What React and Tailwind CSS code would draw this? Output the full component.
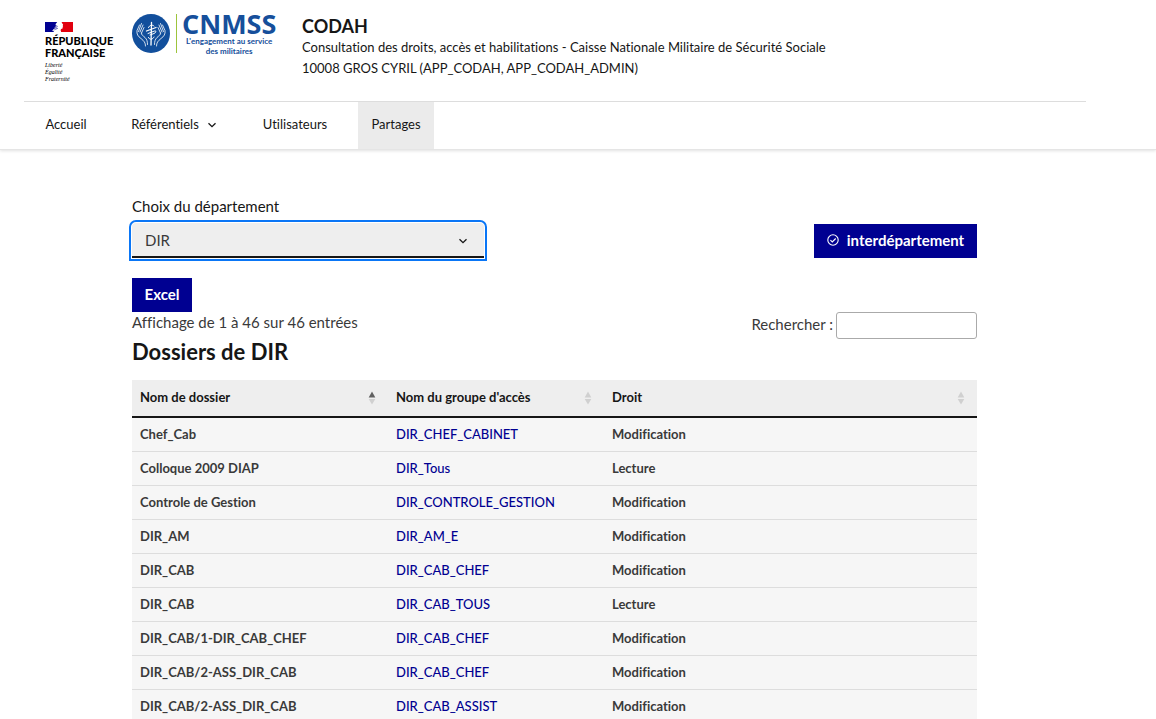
import { useState } from "react";

const NAV_ITEMS = [
  { label: "Accueil", className: "ml-[7px] w-[70px]" },
  { label: "Référentiels", className: "ml-4 w-[114px]", menu: true },
  { label: "Utilisateurs", className: "ml-[17px] w-[94px]" },
  { label: "Partages", className: "ml-4 w-[76px]", active: true },
];

const COLUMNS = [
  { label: "Nom de dossier", width: "w-[256px]", sort: "asc" },
  { label: "Nom du groupe d'accès", width: "w-[216px]" },
  { label: "Droit", width: "" },
];

const DOSSIERS = [
  { nom: "Chef_Cab", groupe: "DIR_CHEF_CABINET", droit: "Modification" },
  { nom: "Colloque 2009 DIAP", groupe: "DIR_Tous", droit: "Lecture" },
  { nom: "Controle de Gestion", groupe: "DIR_CONTROLE_GESTION", droit: "Modification" },
  { nom: "DIR_AM", groupe: "DIR_AM_E", droit: "Modification" },
  { nom: "DIR_CAB", groupe: "DIR_CAB_CHEF", droit: "Modification" },
  { nom: "DIR_CAB", groupe: "DIR_CAB_TOUS", droit: "Lecture" },
  { nom: "DIR_CAB/1-DIR_CAB_CHEF", groupe: "DIR_CAB_CHEF", droit: "Modification" },
  { nom: "DIR_CAB/2-ASS_DIR_CAB", groupe: "DIR_CAB_CHEF", droit: "Modification" },
  { nom: "DIR_CAB/2-ASS_DIR_CAB", groupe: "DIR_CAB_ASSIST", droit: "Modification" },
];

const Chevron = ({ className }) => (
  <svg viewBox="0 0 10 10" className={className} fill="none" stroke="currentColor" strokeWidth="1.3" aria-hidden="true">
    <path d="M1.5 3.2 5 6.7l3.5-3.5" />
  </svg>
);

const SortIcon = ({ sort }) => (
  <svg width="8" height="14" viewBox="0 0 8 14" aria-hidden="true">
    <path d="M4 0.5 7.3 6.5H0.7z" fill={sort === "asc" ? "#606060" : "#d0d0d0"} />
    <path d="M4 13.5 7.3 8H0.7z" fill="#d0d0d0" />
  </svg>
);

const RepubliqueLogo = () => (
  <div className="mt-[22px] w-[87px] text-black">
    <svg width="28" height="10" viewBox="0 0 28 10" aria-hidden="true">
      <path d="M0 0h14v10H0z" fill="#000091" />
      <path d="M14 0h14v10H14z" fill="#e1000f" />
      <path
        d="M12.2 0h4.4l.6 1.4 1 .8-.5.8.4 1.2-.5.9.2 1.2-1.6.6-.6 1 .5 2.1H8.300l1-1.3-2.400.4 1.700-1.5-.7-.2 2.300-1.200-.7-.5 1.600-1.600-.6-1.800z"
        fill="#fff"
      />
      <path d="M10.500 3.200l2 1.200-2.400 1.500 2.600.5-3.400 1.400" fill="none" stroke="#5a5ab4" strokeWidth=".8" />
    </svg>
    <p className="mt-[3px] font-['Lato'] text-[11px] leading-[12px] font-black">
      RÉPUBLIQUE
      <br />
      FRANÇAISE
    </p>
    <p className="mt-[3px] font-['Liberation_Serif'] text-[6px] leading-[7px] italic">
      Liberté
      <br />
      Égalité
      <br />
      Fraternité
    </p>
  </div>
);

const CnmssLogo = () => (
  <div className="mt-[13px] flex w-[170px] text-[#164f9b]">
    <svg width="38" height="40" viewBox="0 0 38 40" className="shrink-0" aria-hidden="true">
      <ellipse cx="19" cy="20.5" rx="19" ry="19.5" fill="#124f9c" />
      <g fill="none" stroke="#fff" strokeLinecap="round" strokeLinejoin="round">
        <path
          strokeWidth=".8"
          d="M13.500 33C13.500 29.500 12 28 9 25.500 6 23.500 4.500 21 5 17.500L7.500 12M6.500 18.500 9.500 10.500M8 19l3-7M9.500 20l2.500-5.500M9.500 20c-.5 2 1.500 2.500 3.500 4.500s2.500 4 2.500 7"
        />
        <path
          strokeWidth=".8"
          d="M24.500 33c0-3.500 1.500-5 4.500-7.500 3-2 4.500-4.500 4-8L30.500 12M31.500 18.500 28.500 10.500M30 19l-3-7M28.500 20 26 14.500M28.500 20c.5 2-1.500 2.500-3.500 4.500s-2.500 4-2.500 7"
        />
        <path strokeWidth="1.300" d="M19.500 9.500 19 32M14.500 18l9.500-3.500" />
        <path strokeWidth="1" d="M16.500 14.500c1-2.500 4-3 5.500-1.500M16 20.500l6.500-2.500c2-1 1.500 2-.5 2.500l-4 1.500M16.500 24.500c1 2.500 4 2.500 5.500-.5" />
      </g>
    </svg>
    <span className="mt-px ml-[6px] h-[39px] w-px bg-[#9dc43c]" />
    <div className="ml-[5px]">
      <p className="h-[23px] font-['Open_Sans'] text-[27px] leading-[22px] font-bold">CNMSS</p>
      <p className="font-['Lato'] text-[8px] leading-[10px] font-bold whitespace-nowrap">
        <span className="block text-center">L'engagement au service</span>
        <span className="block text-center">des militaires</span>
      </p>
    </div>
  </div>
);

const Header = () => (
  <header className="border-b border-[#e5e5e5] shadow-[0_1px_3px_rgba(0,0,0,0.12)]">
    <div className="mr-[70px] ml-6">
      <div className="flex h-[101px] pl-[21px]">
        <RepubliqueLogo />
        <CnmssLogo />
        <div className="pt-4 text-[13px] text-[#161616]">
          <h1 className="text-[18px] leading-5 font-bold">CODAH</h1>
          <p className="mt-px leading-[21px]">
            Consultation des droits, accès et habilitations - Caisse Nationale Militaire de Sécurité Sociale
          </p>
          <p className="leading-5">10008 GROS CYRIL (APP_CODAH, APP_CODAH_ADMIN)</p>
        </div>
      </div>
      <nav className="flex border-t border-[#dddddd]">
        {NAV_ITEMS.map((item) =>
          item.menu ? (
            <button
              key={item.label}
              type="button"
              className={`flex h-[47px] items-center justify-center gap-2 pb-[2px] text-[13px] text-[#161616] ${item.className}`}
            >
              {item.label}
              <Chevron className="size-[10px]" />
            </button>
          ) : (
            <a
              key={item.label}
              href="#"
              aria-current={item.active ? "page" : undefined}
              className={`flex h-[47px] items-center justify-center pb-[2px] text-[13px] text-[#161616] ${
                item.active ? "bg-[#ebebeb]" : ""
              } ${item.className}`}
            >
              {item.label}
            </a>
          )
        )}
      </nav>
    </div>
  </header>
);

const DossiersTable = () => (
  <table className="mt-4 w-full table-fixed border-collapse text-left text-[13px] font-bold">
    <thead className="border-b-2 border-[#161616] bg-[#eeeeee] text-[#161616]">
      <tr className="h-[37px]">
        {COLUMNS.map((col) => (
          <th key={col.label} className={`px-2 ${col.width}`}>
            <div className="flex items-center justify-between pr-1">
              {col.label}
              <SortIcon sort={col.sort} />
            </div>
          </th>
        ))}
      </tr>
    </thead>
    <tbody className="bg-[#f6f6f6] text-[#3a3a3a]">
      {DOSSIERS.map((dossier, index) => (
        <tr key={index} className="h-[34px] border-b border-[#dddddd]">
          <td className="px-2 pt-px">{dossier.nom}</td>
          <td className="px-2 pt-px font-medium">
            <a href="#" className="text-[#000091]">
              {dossier.groupe}
            </a>
          </td>
          <td className="px-2 pt-px">{dossier.droit}</td>
        </tr>
      ))}
    </tbody>
  </table>
);

const App = () => {
  const [departement, setDepartement] = useState("DIR");
  const [recherche, setRecherche] = useState("");

  return (
    <div className="h-screen overflow-y-auto bg-white font-['Lato',sans-serif] text-[15px] text-[#3a3a3a] [font-variant-ligatures:none] [scrollbar-width:none]">
      <Header />
      <main className="mr-[179px] ml-[132px] pt-[46px]">
        <div className="flex items-end justify-between">
          <div>
            <label htmlFor="departement" className="block leading-5 text-[#161616]">
              Choix du département
            </label>
            <div className="mt-[7px] grid w-[352px] items-center">
              <select
                id="departement"
                value={departement}
                onChange={(e) => setDepartement(e.target.value)}
                className="col-start-1 row-start-1 h-[35px] appearance-none rounded-t border-b-2 border-[#161616] bg-[#eeeeee] px-[13px] pt-px outline-2 outline-offset-1 outline-[#0a76f6]"
              >
                <option value="DIR">DIR</option>
              </select>
              <Chevron className="pointer-events-none col-start-1 row-start-1 mr-4 size-[10px] justify-self-end text-[#161616]" />
            </div>
          </div>
          <button
            type="button"
            className="flex h-[34px] w-[163px] items-center justify-center gap-2 bg-[#000091] pb-[2px] font-bold text-white"
          >
            <svg width="12" height="12" viewBox="0 0 12 12" fill="none" stroke="currentColor" aria-hidden="true">
              <circle cx="6" cy="6" r="5.2" strokeWidth="1.1" />
              <path d="M3.400 6.100 5.300 8 8.700 4.500" strokeWidth="1.100" />
            </svg>
            interdépartement
          </button>
        </div>

        <button type="button" className="mt-5 block h-[34px] w-[60px] bg-[#000091] pb-[2px] font-bold text-white">
          Excel
        </button>
        <div className="flex items-start justify-between">
          <div>
            <p className="leading-5">Affichage de 1 à 46 sur 46 entrées</p>
            <h2 className="mt-2 text-[22px] leading-6 font-bold text-[#161616]">Dossiers de DIR</h2>
          </div>
          <div className="flex items-center gap-[3px]">
            <label htmlFor="recherche" className="pb-[2px]">
              Rechercher :
            </label>
            <input
              id="recherche"
              type="search"
              value={recherche}
              onChange={(e) => setRecherche(e.target.value)}
              className="h-[27px] w-[141px] rounded-[3px] border border-[#aaaaaa] px-1 outline-none"
            />
          </div>
        </div>
        <DossiersTable />
      </main>
    </div>
  );
};

export default App;
